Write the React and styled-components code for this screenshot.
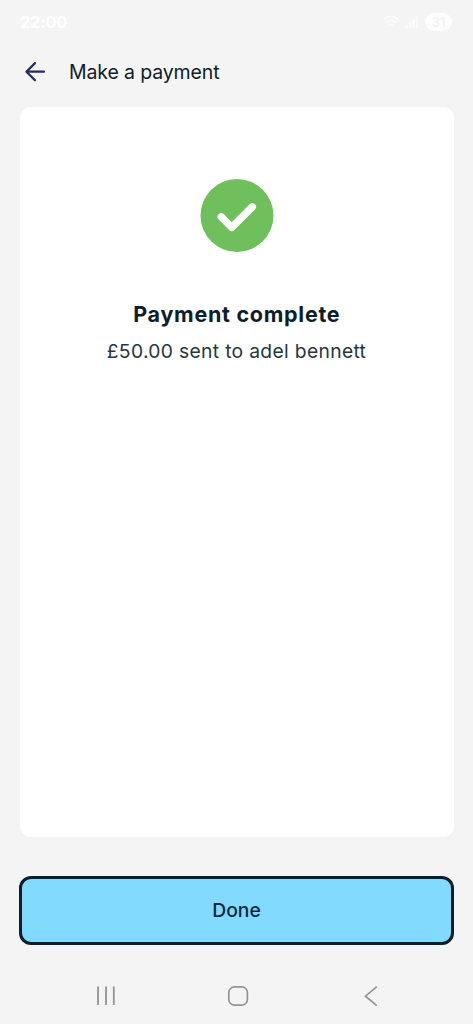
import React from 'react';
import styled, { createGlobalStyle } from 'styled-components';

const GlobalStyle = createGlobalStyle`
  * { box-sizing: border-box; }
  body { margin: 0; background: #f4f4f4; }
`;

const Screen = styled.div`
  display: flex;
  flex-direction: column;
  width: 100%;
  height: 1024px;
  overflow: hidden;
  background: #f4f4f4;
  color: #0d2029;
  font-family: Inter, 'Liberation Sans', sans-serif;
`;

const StatusBar = styled.div`
  display: flex;
  align-items: center;
  justify-content: space-between;
  flex: none;
  height: 44px;
  padding: 0 21px 0 20px;
  color: #fff;
`;

const Clock = styled.span`
  font-size: 16.5px;
  font-weight: 700;
  line-height: 20px;
  letter-spacing: -0.3px;
`;

const StatusIcons = styled.div`
  display: flex;
  align-items: center;
  gap: 6px;
`;

const Battery = styled.span`
  width: 27px;
  height: 18px;
  border-radius: 9px;
  background: #fdfdfd;
  color: #f4f4f4;
  font-size: 13px;
  font-weight: 700;
  line-height: 18px;
  text-align: center;
`;

const Header = styled.header`
  display: flex;
  align-items: center;
  flex: none;
  height: 56px;
  padding-left: 24px;
  gap: 23px;
`;

const BackButton = styled.button`
  display: flex;
  padding: 0;
  border: 0;
  background: none;
`;

const Title = styled.h1`
  margin: 0;
  font-size: 19.5px;
  font-weight: 400;
  line-height: 28px;
  letter-spacing: -0.13px;
`;

const Card = styled.main`
  display: flex;
  flex-direction: column;
  align-items: center;
  flex: none;
  height: 730px;
  margin: 6.5px 19.5px 0;
  padding-top: 72px;
  border-radius: 11px;
  background: #fff;
`;

const Heading = styled.h2`
  margin: 46px 0 0;
  padding-left: 0.6px;
  font-size: 21.5px;
  font-weight: 650;
  line-height: 30px;
  letter-spacing: 0.72px;
  white-space: nowrap;
`;

const Detail = styled.p`
  margin: 8px 0 0;
  color: #26363e;
  font-size: 19.3px;
  font-weight: 400;
  line-height: 28px;
  letter-spacing: 0.32px;
  white-space: nowrap;
`;

const DoneButton = styled.button`
  flex: none;
  height: 69px;
  margin: 39.5px 19px 0;
  padding: 0 0 2px;
  border: 3px solid #0b1f29;
  border-radius: 12px;
  background: #83daff;
  color: #08283c;
  font-family: inherit;
  font-size: 19.3px;
  font-weight: 500;
  line-height: 28px;
`;

const NavBar = styled.nav`
  display: flex;
  align-items: center;
  justify-content: space-between;
  flex: none;
  height: 60px;
  margin-top: 20.5px;
  padding: 0 90px 0 94px;
`;

export default function App() {
  return (
    <>
      <GlobalStyle />
      <Screen>
        <StatusBar>
          <Clock>22:00</Clock>
          <StatusIcons>
            <svg width="16" height="14" viewBox="0 0 16 14" fill="none" stroke="#fbfbfb" strokeWidth="1.8" strokeLinecap="round">
              <path d="M1 4.2Q8-1.4 15 4.2M3.6 7.2Q8 3.8 12.4 7.2M6.3 10.2Q8 8.9 9.7 10.2" />
            </svg>
            <svg width="14" height="14" viewBox="0 0 14 14" fill="none" stroke="#fbfbfb" strokeWidth="2">
              <path d="M1.5 10v3M5 7.5V13M8.5 4.5V13M12 1.5V13" />
            </svg>
            <Battery>31</Battery>
          </StatusIcons>
        </StatusBar>
        <Header>
          <BackButton aria-label="Back">
            <svg width="22" height="22" viewBox="0 0 22 22" fill="none" stroke="#242a63" strokeWidth="2.2" strokeLinecap="round" strokeLinejoin="round">
              <path d="M20 10.7H2.4M11 2.1L2.4 10.7L11 19.3" />
            </svg>
          </BackButton>
          <Title>Make a payment</Title>
        </Header>
        <Card>
          <svg width="74" height="74" viewBox="0 0 74 74">
            <circle cx="37" cy="36.5" r="36.5" fill="#70bf5d" />
            <path d="M21.3 37.8L31.8 48.3L52.3 27.8" fill="none" stroke="#fff" strokeWidth="7.4" strokeLinecap="round" strokeLinejoin="round" />
          </svg>
          <Heading>Payment complete</Heading>
          <Detail>£50.00 sent to adel bennett</Detail>
        </Card>
        <DoneButton>Done</DoneButton>
        <NavBar>
          <svg width="24" height="24" viewBox="0 0 24 24" stroke="#949494" strokeWidth="1.8">
            <path d="M4 2.5V21M12 2.5V21M19.8 2.5V21" />
          </svg>
          <svg width="24" height="24" viewBox="0 0 24 24" fill="none" stroke="#949494" strokeWidth="1.7">
            <rect x="1.8" y="2.8" width="18.6" height="18.4" rx="5.8" />
          </svg>
          <svg width="24" height="24" viewBox="0 0 24 24" fill="none" stroke="#949494" strokeWidth="1.7">
            <path d="M17.8 2.6L6.5 12.2L17.8 21.6" />
          </svg>
        </NavBar>
      </Screen>
    </>
  );
}
